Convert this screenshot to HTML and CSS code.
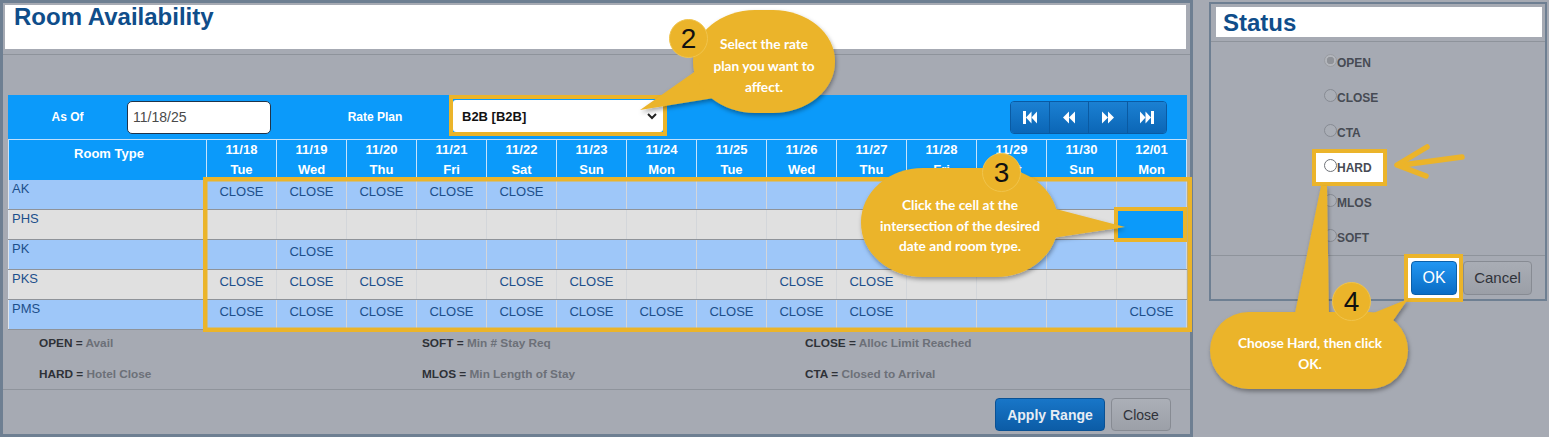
FILE: index.html
```html
<!DOCTYPE html>
<html>
<head>
<meta charset="utf-8">
<title>Room Availability</title>
<link rel="stylesheet" href="styles.css">
</head>
<body>
<div class="page">
  <section class="main">
    <header class="main-head">
      <div class="title-box"><h1>Room Availability</h1></div>
    </header>

    <div class="grid">
      <div class="toolbar">
        <div class="tb-lab1">As Of</div>
        <div class="tb-input">11/18/25</div>
        <div class="tb-lab2">Rate Plan</div>
        <div class="sel-frame">
          <div class="tb-select">
            <span>B2B [B2B]</span>
            <svg class="chev" width="10" height="7" viewBox="0 0 10 7"><polyline points="1,1 5,5 9,1" fill="none" stroke="#222" stroke-width="2"/></svg>
          </div>
        </div>
        <div class="tb-spacer"></div>
        <div class="nav">
          <button class="nav-btn"><svg width="14" height="13" viewBox="0 0 14 13"><rect x="0" y="0" width="3" height="13" fill="#fff"/><polygon points="3,6.5 8.5,0.5 8.5,12.5" fill="#fff"/><polygon points="8.5,6.5 14,0.5 14,12.5" fill="#fff"/></svg></button>
          <button class="nav-btn"><svg width="12" height="13" viewBox="0 0 12 13"><polygon points="0,6.5 6,0.5 6,12.5" fill="#fff"/><polygon points="6,6.5 12,0.5 12,12.5" fill="#fff"/></svg></button>
          <button class="nav-btn"><svg width="12" height="13" viewBox="0 0 12 13"><polygon points="12,6.5 6,0.5 6,12.5" fill="#fff"/><polygon points="6,6.5 0,0.5 0,12.5" fill="#fff"/></svg></button>
          <button class="nav-btn"><svg width="14" height="13" viewBox="0 0 14 13"><rect x="11" y="0" width="3" height="13" fill="#fff"/><polygon points="11,6.5 5.5,0.5 5.5,12.5" fill="#fff"/><polygon points="5.5,6.5 0,0.5 0,12.5" fill="#fff"/></svg></button>
        </div>
      </div>

      <div class="row head">
        <div class="c room">Room Type</div>
        <div class="c">11/18<br>Tue</div>
        <div class="c">11/19<br>Wed</div>
        <div class="c">11/20<br>Thu</div>
        <div class="c">11/21<br>Fri</div>
        <div class="c">11/22<br>Sat</div>
        <div class="c">11/23<br>Sun</div>
        <div class="c">11/24<br>Mon</div>
        <div class="c">11/25<br>Tue</div>
        <div class="c">11/26<br>Wed</div>
        <div class="c">11/27<br>Thu</div>
        <div class="c">11/28<br>Fri</div>
        <div class="c">11/29<br>Sat</div>
        <div class="c">11/30<br>Sun</div>
        <div class="c">12/01<br>Mon</div>
      </div>

      <div class="row blue">
        <div class="c room">AK</div>
        <div class="c">CLOSE</div><div class="c">CLOSE</div><div class="c">CLOSE</div><div class="c">CLOSE</div><div class="c">CLOSE</div>
        <div class="c"></div><div class="c"></div><div class="c"></div><div class="c"></div><div class="c"></div>
        <div class="c"></div><div class="c"></div><div class="c"></div><div class="c"></div>
      </div>
      <div class="row gray">
        <div class="c room">PHS</div>
        <div class="c"></div><div class="c"></div><div class="c"></div><div class="c"></div><div class="c"></div>
        <div class="c"></div><div class="c"></div><div class="c"></div><div class="c"></div><div class="c"></div>
        <div class="c"></div><div class="c"></div><div class="c"></div><div class="c selected"></div>
      </div>
      <div class="row blue">
        <div class="c room">PK</div>
        <div class="c"></div><div class="c">CLOSE</div><div class="c"></div><div class="c"></div><div class="c"></div>
        <div class="c"></div><div class="c"></div><div class="c"></div><div class="c"></div><div class="c"></div>
        <div class="c"></div><div class="c"></div><div class="c"></div><div class="c"></div>
      </div>
      <div class="row gray">
        <div class="c room">PKS</div>
        <div class="c">CLOSE</div><div class="c">CLOSE</div><div class="c">CLOSE</div><div class="c"></div><div class="c">CLOSE</div>
        <div class="c">CLOSE</div><div class="c"></div><div class="c"></div><div class="c">CLOSE</div><div class="c">CLOSE</div>
        <div class="c"></div><div class="c"></div><div class="c"></div><div class="c"></div>
      </div>
      <div class="row blue">
        <div class="c room">PMS</div>
        <div class="c">CLOSE</div><div class="c">CLOSE</div><div class="c">CLOSE</div><div class="c">CLOSE</div><div class="c">CLOSE</div>
        <div class="c">CLOSE</div><div class="c">CLOSE</div><div class="c">CLOSE</div><div class="c">CLOSE</div><div class="c">CLOSE</div>
        <div class="c"></div><div class="c"></div><div class="c"></div><div class="c">CLOSE</div>
      </div>
    </div>

    <div class="legend">
      <div><b>OPEN =</b> <span class="v">Avail</span></div>
      <div><b>SOFT =</b> <span class="v">Min # Stay Req</span></div>
      <div><b>CLOSE =</b> <span class="v">Alloc Limit Reached</span></div>
      <div><b>HARD =</b> <span class="v">Hotel Close</span></div>
      <div><b>MLOS =</b> <span class="v">Min Length of Stay</span></div>
      <div><b>CTA =</b> <span class="v">Closed to Arrival</span></div>
    </div>

    <div class="main-foot">
      <button class="btn primary">Apply Range</button>
      <button class="btn plain">Close</button>
    </div>
  </section>

  <section class="status">
    <header class="status-head">
      <div class="status-title"><h2>Status</h2></div>
    </header>
    <div class="radios">
      <div class="radio-item"><span class="radio checked"></span>OPEN</div>
      <div class="radio-item"><span class="radio"></span>CLOSE</div>
      <div class="radio-item"><span class="radio"></span>CTA</div>
      <div class="radio-item hl"><span class="radio"></span>HARD</div>
      <div class="radio-item"><span class="radio"></span>MLOS</div>
      <div class="radio-item"><span class="radio"></span>SOFT</div>
    </div>
    <div class="status-foot">
      <span class="okwrap"><button class="btn ok">OK</button></span>
      <button class="btn cancel">Cancel</button>
    </div>
  </section>

  <svg class="annot" width="1549" height="437" viewBox="0 0 1549 437">
    <defs>
      <filter id="sh" x="-20%" y="-20%" width="140%" height="160%">
        <feDropShadow dx="1" dy="2.5" stdDeviation="2" flood-color="#000" flood-opacity="0.35"/>
      </filter>
    </defs>
    <rect x="205.25" y="179.25" width="984.5" height="150.5" fill="none" stroke="#ebb42a" stroke-width="4.5"/>
    <rect x="1116" y="209" width="69" height="31" fill="none" stroke="#ebb42a" stroke-width="4"/>

    <g filter="url(#sh)" fill="#ebb42a">
      <polygon points="700,68 714,98 640,110"/>
      <rect x="693" y="10" width="142" height="103" rx="62" ry="51"/>
    </g>
    <g filter="url(#sh)" fill="#ebb42a">
      <polygon points="1052,208 1052,238 1125,227"/>
      <rect x="861" y="168" width="197" height="109" rx="62" ry="54"/>
    </g>
    <g filter="url(#sh)" fill="#ebb42a">
      <polygon points="1321,186 1327,186 1329,318 1294,318"/>
      <polygon points="1366,316 1392,322 1408,299"/>
      <rect x="1210" y="312" width="198" height="77" rx="38.5" ry="38.5"/>
    </g>

    <path d="M1462 157 L1402 165" fill="none" stroke="#ebb42a" stroke-width="5.5" stroke-linecap="round"/>
    <path d="M1427 147 L1397 165 L1426 176" fill="none" stroke="#ebb42a" stroke-width="5.5" stroke-linecap="round" stroke-linejoin="round"/>
  </svg>

  <div class="badge b2">2</div>
  <div class="badge b3">3</div>
  <div class="badge b4">4</div>

  <div class="ctext t2">Select the rate<br>plan you want to<br>affect.</div>
  <div class="ctext t3">Click the cell at the<br>intersection of the desired<br>date and room type.</div>
  <div class="ctext t4">Choose Hard, then click<br>OK.</div>
</div>
</body>
</html>
```

FILE: styles.css
```css
html, body {
  margin: 0;
  padding: 0;
}
body {
  background: #a6aab3;
  font-family: "Liberation Sans", Arial, sans-serif;
}
.page {
  position: relative;
  width: 1549px;
  height: 437px;
  display: flex;
  align-items: flex-start;
  overflow: hidden;
}

/* ---------- main modal ---------- */
.main {
  width: 1193px;
  height: 437px;
  box-sizing: border-box;
  border: 3px solid #6e7f92;
  display: flex;
  flex-direction: column;
}
.main-head {
  padding: 2px 4px 5px 2px;
  border-bottom: 1px solid #8e939b;
}
.title-box {
  background: #fff;
  height: 44px;
  padding-left: 9px;
}
.title-box h1 {
  margin: 0;
  font-size: 24px;
  line-height: 24px;
  font-weight: bold;
  color: #0f4d8a;
}

.grid {
  margin: 40px 3px 0 5px;
  width: 1179px;
}
.toolbar {
  height: 44px;
  background: #0b9afa;
  display: flex;
  align-items: center;
  color: #fff;
  font-weight: bold;
  font-size: 12px;
}
.tb-lab1 {
  width: 119px;
  text-align: center;
}
.tb-input {
  width: 144px;
  height: 33px;
  box-sizing: border-box;
  background: #fff;
  border: 1px solid #20344a;
  border-radius: 5px;
  color: #4a4a4a;
  font-weight: normal;
  font-size: 14px;
  line-height: 31px;
  padding-left: 5px;
}
.tb-lab2 {
  width: 178px;
  box-sizing: border-box;
  padding-left: 30px;
  text-align: center;
}
.sel-frame {
  align-self: flex-start;
  width: 218px;
  height: 41px;
  box-sizing: border-box;
  border: 4px solid #ebb42a;
  padding-top: 1px;
}
.tb-select {
  height: 32px;
  background: #fff;
  border-radius: 3px;
  display: flex;
  align-items: center;
  justify-content: space-between;
  padding: 0 6px 0 9px;
  color: #111;
  font-size: 13px;
  font-weight: bold;
}
.tb-spacer {
  flex: 1;
}
.nav {
  width: 157px;
  height: 33px;
  margin-right: 20px;
  display: flex;
  border: 1px solid #0a5aa2;
  border-radius: 4px;
  box-sizing: border-box;
  overflow: hidden;
}
.nav-btn {
  flex: 1;
  border: 0;
  border-right: 1px solid #0a5aa2;
  background: linear-gradient(#1b80d2, #0b66b6);
  display: flex;
  align-items: center;
  justify-content: center;
  padding: 0;
}
.nav-btn:last-child {
  border-right: 0;
}

.row {
  display: grid;
  grid-template-columns: 199px repeat(14, 70px);
  height: 30px;
  box-sizing: border-box;
  border-bottom: 1px solid #8f9399;
}
.row .c {
  border-right: 1px solid #d3d6da;
  font-size: 13px;
  line-height: 15px;
  padding-top: 4px;
  text-align: center;
  color: #1c4f8b;
}
.row .c.room {
  text-align: left;
  padding: 1px 0 0 3px;
  border-left: 1px solid #dfe6ee;
}
.row.head {
  height: 41px;
  border-top: 1px solid #bfe0fc;
  border-bottom: none;
  background: #0b9afa;
}
.row.head .c {
  color: #fff;
  font-weight: bold;
  font-size: 13px;
  line-height: 20px;
  padding-top: 0;
  border-right: 1px solid #c6e3fc;
}
.row.head .c.room {
  text-align: center;
  padding-top: 4px;
  border-left: 1px solid #c6e3fc;
}
.row.blue {
  background: #9ec7f9;
}
.row.gray {
  background: #e0e0e0;
}
.row .c.selected {
  background: #0b9afa;
}

.legend {
  display: grid;
  grid-template-columns: repeat(3, 383px);
  row-gap: 15px;
  padding: 5px 0 7px 36px;
  border-bottom: 1px solid #8f949c;
  font-size: 11.8px;
  line-height: 16px;
  font-weight: bold;
}
.legend b {
  color: #2e3137;
}
.legend .v {
  color: #6c7078;
}

.main-foot {
  flex: 1;
  display: flex;
  justify-content: flex-end;
  align-items: flex-start;
  gap: 6px;
  padding: 8px 19px 0 0;
}
.btn {
  height: 33px;
  border-radius: 4px;
  font-family: "Liberation Sans", Arial, sans-serif;
  font-size: 14px;
  padding: 0;
  box-sizing: border-box;
}
.btn.primary {
  width: 110px;
  background: linear-gradient(#1876c8, #0c5ca6);
  border: 1px solid #0a5194;
  color: #e6edf5;
  font-weight: bold;
}
.btn.plain {
  width: 60px;
  background: linear-gradient(#abafb7, #9ca0a8);
  border: 1px solid #878b93;
  color: #30333a;
}

/* ---------- status panel ---------- */
.status {
  margin: 2px 0 0 16px;
  width: 338px;
  height: 299px;
  box-sizing: border-box;
  border: 2px solid #6e7f92;
  display: flex;
  flex-direction: column;
}
.status-head {
  padding: 3px 3px 4px 5px;
  border-bottom: 1px solid #8e939b;
}
.status-title {
  background: #fff;
  height: 30px;
  padding-left: 7px;
}
.status-title h2 {
  margin: 0;
  font-size: 24px;
  line-height: 30px;
  padding-top: 1px;
  font-weight: bold;
  color: #0f4d8a;
}
.radios {
  padding: 3px 0 0 113px;
  border-bottom: 1px solid #8e939b;
}
.radio-item {
  height: 35px;
  display: flex;
  align-items: center;
  font-weight: bold;
  font-size: 12px;
  color: #474b54;
}
.radio {
  width: 13px;
  height: 13px;
  box-sizing: border-box;
  border: 1px solid #878b93;
  border-radius: 50%;
  background: #aaaeb6;
  margin-top: -4px;
}
.radio.checked {
  border-color: #9a9da3;
  background: radial-gradient(circle, #8f9298 0 3.5px, #b2b5bb 4px);
}
.radio-item.hl {
  position: relative;
  z-index: 0;
}
.radio-item.hl .radio {
  background: #fff;
  border-color: #6f7379;
}
.radio-item.hl::before {
  content: "";
  position: absolute;
  left: -12px;
  top: -1px;
  width: 75px;
  height: 37px;
  box-sizing: border-box;
  background: #fff;
  border: 4px solid #ebb42a;
  z-index: -1;
}
.status-foot {
  flex: 1;
  display: flex;
  justify-content: flex-end;
  align-items: center;
  gap: 6px;
  padding-right: 13px;
}
.okwrap {
  position: relative;
  z-index: 0;
  display: flex;
}
.okwrap::before {
  content: "";
  position: absolute;
  left: -7px;
  right: -6px;
  top: -7px;
  bottom: -7px;
  background: #fff;
  border: 4px solid #ebb42a;
  z-index: -1;
}
.btn.ok {
  width: 46px;
  height: 34px;
  background: linear-gradient(#2196f2, #0a6cc4);
  border: 1px solid #0b5fa8;
  color: #fff;
  font-size: 16px;
}
.btn.cancel {
  width: 69px;
  height: 34px;
  background: linear-gradient(#a9adb5, #9b9fa7);
  border: 1px solid #878b93;
  color: #30333a;
  font-size: 15px;
}

/* ---------- annotations ---------- */
.annot {
  position: absolute;
  left: 0;
  top: 0;
  pointer-events: none;
}
.badge {
  position: absolute;
  width: 39px;
  height: 39px;
  box-sizing: border-box;
  border-radius: 50%;
  background: #ebb42a;
  border: 1px solid #f0c44c;
  display: flex;
  align-items: center;
  justify-content: center;
  font-family: "Liberation Sans", Arial, sans-serif;
  font-size: 28px;
  color: #111;
}
.b2 { left: 669px; top: 19px; }
.b3 { left: 982px; top: 153px; }
.b4 { left: 1332px; top: 282px; }

.ctext {
  position: absolute;
  font-family: Lato, "Open Sans", sans-serif;
  font-weight: bold;
  font-size: 13.7px;
  color: #fff;
  text-align: center;
}
.t2 {
  left: 694px;
  width: 140px;
  top: 33px;
  line-height: 21.5px;
}
.t3 {
  left: 855px;
  width: 210px;
  top: 195px;
  line-height: 20.5px;
}
.t4 {
  left: 1205px;
  width: 210px;
  top: 332px;
  line-height: 21px;
}
```
